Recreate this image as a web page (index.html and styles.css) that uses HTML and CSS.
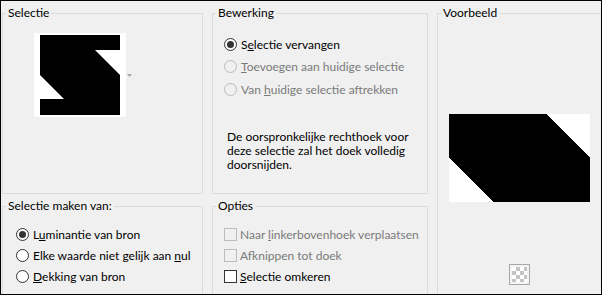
FILE: index.html
```html
<!DOCTYPE html>
<html>
<head>
<meta charset="utf-8">
<link rel="stylesheet" href="styles.css">
</head>
<body>
<div class="dialog">
  <fieldset class="group g-selectie">
    <legend>Selectie</legend>
    <div class="thumb-row">
      <svg class="thumb" width="92" height="84" viewBox="0 0 92 84">
        <rect width="92" height="84" fill="#fff"/>
        <polygon points="6,2 86,2 86,17 61,17 86,42 86,82 6,82 6,66 30,66 6,42" fill="#000"/>
      </svg>
      <svg class="dd-arrow" width="5" height="3" viewBox="0 0 5 3">
        <polygon points="0,0 5,0 2.5,3" fill="#a6a6a6"/>
      </svg>
    </div>
  </fieldset>

  <fieldset class="group g-bewerking">
    <legend>Bewerking</legend>
    <div class="options wide">
      <div class="opt"><span class="radio checked"></span><span>S<u>e</u>lectie vervangen</span></div>
      <div class="opt disabled"><span class="radio"></span><span><u>T</u>oevoegen aan huidige selectie</span></div>
      <div class="opt disabled"><span class="radio"></span><span>Van <u>h</u>uidige selectie aftrekken</span></div>
    </div>
    <p class="note">De oorspronkelijke rechthoek voor<br>deze selectie zal het doek volledig<br>doorsnijden.</p>
  </fieldset>

  <fieldset class="group g-voorbeeld">
    <legend>Voorbeeld</legend>
    <div class="preview-wrap">
      <svg class="preview" width="141" height="88" viewBox="0 0 141 88" shape-rendering="crispEdges">
        <rect width="141" height="88" fill="#fff"/>
        <polygon points="0,0 97,0 141,44 141,88 44,88 0,44" fill="#000"/>
      </svg>
      <span class="checker"></span>
    </div>
  </fieldset>

  <fieldset class="group g-maken">
    <legend>Selectie maken van:</legend>
    <div class="options tight left">
      <div class="opt"><span class="radio checked"></span><span>L<u>u</u>minantie van bron</span></div>
      <div class="opt"><span class="radio"></span><span>Elke waarde niet gelijk aan <u>n</u>ul</span></div>
      <div class="opt"><span class="radio"></span><span><u>D</u>ekking van bron</span></div>
    </div>
  </fieldset>

  <fieldset class="group g-opties">
    <legend>Opties</legend>
    <div class="options tight">
      <div class="opt disabled"><span class="check"></span><span>Naar <u>l</u>inkerbovenhoek verplaatsen</span></div>
      <div class="opt disabled"><span class="check"></span><span>Af<u>k</u>nippen tot doek</span></div>
      <div class="opt"><span class="check"></span><span><u>S</u>electie omkeren</span></div>
    </div>
  </fieldset>
</div>
</body>
</html>
```

FILE: styles.css
```css
* { box-sizing: border-box; }

html, body {
  margin: 0;
  padding: 0;
}

body {
  width: 602px;
  height: 295px;
  background: #f0f0f0;
  font-family: Lato, "Noto Sans", sans-serif;
  font-size: 12px;
  color: #000;
  overflow: hidden;
}

.dialog {
  width: 602px;
  height: 295px;
  border: 1px solid #000;
  padding: 4px 0 0 1px;
  overflow: hidden;
  display: grid;
  grid-template-columns: 201px 216px 165px;
  grid-template-rows: 189px 130px;
  column-gap: 9px;
  row-gap: 4px;
}

.group {
  margin: 0;
  padding: 0;
  border: 1px solid #dcdcdc;
  min-width: 0;
}

.group legend {
  padding: 0 2px;
  margin-left: 3px;
  line-height: 16px;
}

.g-voorbeeld {
  grid-column: 3;
  grid-row: 1 / 3;
}

/* Selectie */
.thumb-row {
  display: flex;
  align-items: center;
  margin: 12px 0 0 31px;
}

.thumb { display: block; }

.dd-arrow {
  display: block;
  margin-left: 1px;
}

/* option rows */
.options.wide {
  margin-top: 12px;
}

.options.wide .opt {
  height: 22.5px;
}

.options.tight {
  margin-top: 9.5px;
}

.options.tight .opt {
  height: 21px;
}

.opt {
  display: flex;
  align-items: center;
  white-space: nowrap;
}

.opt.disabled {
  color: #7a7a7a;
}

u {
  text-decoration: underline;
  text-underline-offset: 1px;
}

.radio {
  flex: none;
  width: 13px;
  height: 13px;
  border: 1px solid #333;
  border-radius: 50%;
  background: #fff;
  display: flex;
  align-items: center;
  justify-content: center;
  margin: 0 4px 0 11px;
}

.left .radio {
  margin-left: 13px;
}

.radio.checked::after {
  content: "";
  width: 7px;
  height: 7px;
  border-radius: 50%;
  background: #333;
}

.disabled .radio {
  border-color: #bcbcbc;
  background: #f0f0f0;
}

.check {
  flex: none;
  width: 13px;
  height: 13px;
  border: 1px solid #333;
  background: #fff;
  margin: 0 3px 0 11px;
}

.disabled .check {
  border-color: #bcbcbc;
  background: #f0f0f0;
}

.note {
  margin: 29.5px 0 0 14px;
  line-height: 14px;
}

/* Voorbeeld */
.preview-wrap {
  display: flex;
  flex-direction: column;
  align-items: center;
  padding-top: 93px;
}

.preview { display: block; }

.checker {
  display: block;
  width: 21px;
  height: 21px;
  margin-top: 62px;
  border: 1px solid #a8a8a8;
  padding: 2px;
  background: repeating-conic-gradient(#c4c4c4 0 25%, #ffffff 0 50%) 0 0 / 8px 8px content-box, #f4f4f4;
}
```
